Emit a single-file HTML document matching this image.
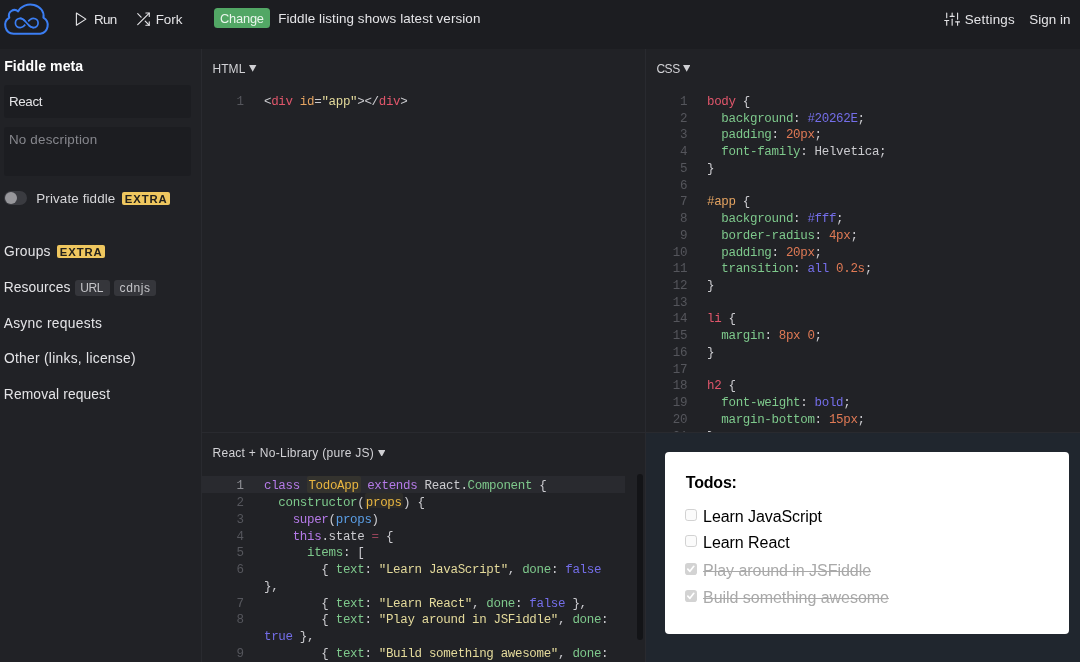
<!DOCTYPE html>
<html lang="en">
<head>
<meta charset="utf-8">
<title>React - JSFiddle</title>
<style>
*{box-sizing:border-box;margin:0;padding:0}
html,body{width:1080px;height:662px;overflow:hidden;background:#212226;color:#e4e4e7;font-family:"Liberation Sans",Arial,sans-serif;font-size:13px}
.t{position:absolute;white-space:nowrap;line-height:1;font-family:"Liberation Sans",Arial,sans-serif}
.abs{position:absolute}
#header{position:absolute;left:0;top:0;width:1080px;height:49px;background:#1c1d21}
.ico{position:absolute;top:10.85px;width:16.3px;height:16.3px;fill:none;stroke:#e4e4e7;stroke-width:1.65;stroke-linecap:round;stroke-linejoin:round}
.box{position:absolute;background:#1c1d21;border-radius:3px}
.badge{position:absolute;background:#efc75f;border-radius:2px}
.tag{position:absolute;background:#35363b;border-radius:3px}
.tri{position:absolute;width:0;height:0;border-left:3.7px solid transparent;border-right:3.7px solid transparent;border-top:6.6px solid #cfcfd3}
.code,.ln{position:absolute;font-family:"Liberation Mono","DejaVu Sans Mono",monospace;font-size:12.5px;letter-spacing:-0.33px;line-height:16.73px;white-space:pre}
.code{color:#cbcbcf}
.ln{color:#55565c;text-align:right;width:40px}
.r{color:#e0566b}.g{color:#7ec98c}.o{color:#e5a461}.y{color:#e4da9b}.p{color:#746ee9}.n{color:#e07a55}.v{color:#b57ae8}.b{color:#5b9fe6}.op{color:#96445a}
.hl{color:#e9b640;padding:0 1.4px}
.cb{position:absolute;width:11.9px;height:11.9px;border-radius:2.8px}
.cb.off{background:#fbfbfb;border:1px solid #d2d2d2}
.cb.on{background:#d3d3d3}
</style>
</head>
<body>
<div id="root" style="position:absolute;left:0;top:0;width:1080px;height:662px;will-change:transform">
<div id="header"></div>
<!-- logo -->
<svg class="abs" style="left:0;top:0" width="60" height="40" viewBox="0 0 60 40" fill="none" stroke="#3b7ef3" stroke-linecap="round" stroke-linejoin="round">
<path stroke-width="2" d="M13.6 33.7 A8.7 8.7 0 0 1 9.3 17.6 A5.6 5.6 0 0 1 18.2 11.4 A13.2 11.2 0 0 1 43.4 17.6 A8.7 8.7 0 0 1 40.3 33.7 Z"/>
<path stroke-width="1.7" d="M26.75 23 C24.5 20.2 22.8 18.4 20.2 18.4 C17.4 18.4 15.4 20.4 15.4 23 C15.4 25.6 17.4 27.6 20.2 27.6 C22.8 27.6 24.5 25.8 26.75 23 C29 20.2 30.7 18.4 33.3 18.4 C36.1 18.4 38.1 20.4 38.1 23 C38.1 25.6 36.1 27.6 33.3 27.6 C30.7 27.6 29 25.8 26.75 23 Z"/>
<path stroke="#1c1d21" stroke-width="4.4" stroke-linecap="butt" d="M24.9 20.9 L28.6 25.1"/>
<path stroke-width="1.7" d="M20.2 18.4 C22.8 18.4 24.5 20.2 26.75 23 C29 25.8 30.7 27.6 33.3 27.6"/>
</svg>
<svg class="ico" style="left:73.15px" viewBox="0 0 24 24"><polygon points="5 3 19 12 5 21 5 3"/></svg>
<svg class="ico" style="left:134.9px" viewBox="0 0 24 24"><polyline points="16 3 21 3 21 8"/><line x1="4" y1="20" x2="21" y2="3"/><polyline points="21 16 21 21 16 21"/><line x1="15" y1="15" x2="21" y2="21"/><line x1="4" y1="4" x2="9" y2="9"/></svg>
<svg class="ico" style="left:943.9px" viewBox="0 0 24 24"><line x1="4" y1="21" x2="4" y2="14"/><line x1="4" y1="10" x2="4" y2="3"/><line x1="12" y1="21" x2="12" y2="12"/><line x1="12" y1="8" x2="12" y2="3"/><line x1="20" y1="21" x2="20" y2="16"/><line x1="20" y1="12" x2="20" y2="3"/><line x1="1" y1="14" x2="7" y2="14"/><line x1="9" y1="8" x2="15" y2="8"/><line x1="17" y1="16" x2="23" y2="16"/></svg>
<div class="abs" style="left:214px;top:8px;width:56.2px;height:20px;background:#52a765;border-radius:3.5px"></div>

<!-- sidebar -->
<div class="abs" style="left:201px;top:49px;width:1px;height:613px;background:#292a2f"></div>
<div class="box" style="left:4px;top:85px;width:187px;height:32.5px"></div>
<div class="box" style="left:4px;top:126.7px;width:187px;height:49px"></div>
<div class="abs" style="left:4px;top:190.8px;width:23px;height:14px;border-radius:7px;background:#3a3b40"></div>
<div class="abs" style="left:4.6px;top:191.6px;width:12px;height:12px;border-radius:50%;background:#97979b"></div>
<div class="badge" style="left:122px;top:192.4px;width:48.1px;height:12.5px"></div>
<div class="badge" style="left:57px;top:245px;width:48px;height:13.2px"></div>
<div class="tag" style="left:75.1px;top:280.2px;width:34.8px;height:15.6px"></div>
<div class="tag" style="left:114.1px;top:280.2px;width:41.8px;height:15.6px"></div>

<!-- panel borders -->
<div class="abs" style="left:645px;top:49px;width:1px;height:613px;background:#292a2f"></div>
<div class="abs" style="left:202px;top:432px;width:878px;height:1px;background:#292a2f"></div>
<svg class="abs" style="left:249.2px;top:65.2px" width="7.4" height="6.8" viewBox="0 0 7.4 6.8"><polygon points="0,0 7.4,0 3.7,6.8" fill="#cfcfd3"/></svg>
<svg class="abs" style="left:682.6px;top:65.2px" width="7.4" height="6.8" viewBox="0 0 7.4 6.8"><polygon points="0,0 7.4,0 3.7,6.8" fill="#cfcfd3"/></svg>
<svg class="abs" style="left:378.1px;top:449.6px" width="7.4" height="6.8" viewBox="0 0 7.4 6.8"><polygon points="0,0 7.4,0 3.7,6.8" fill="#cfcfd3"/></svg>

<!-- HTML code -->
<div class="ln" style="left:203.6px;top:93.9px">1</div>
<div class="code" style="left:264px;top:93.9px">&lt;<span class="r">div</span> <span class="o">id</span>=<span class="y">"app"</span>&gt;&lt;/<span class="r">div</span>&gt;</div>

<!-- CSS code -->
<div class="abs" style="left:646px;top:85px;width:434px;height:347px;overflow:hidden">
<div class="ln" style="left:1.1px;top:8.9px">1
2
3
4
5
6
7
8
9
10
11
12
13
14
15
16
17
18
19
20
21</div>
<div class="code" style="left:61px;top:8.9px"><span class="r">body</span> {
  <span class="g">background</span>: <span class="p">#20262E</span>;
  <span class="g">padding</span>: <span class="n">20px</span>;
  <span class="g">font-family</span>: Helvetica;
}

<span class="o">#app</span> {
  <span class="g">background</span>: <span class="p">#fff</span>;
  <span class="g">border-radius</span>: <span class="n">4px</span>;
  <span class="g">padding</span>: <span class="n">20px</span>;
  <span class="g">transition</span>: <span class="p">all</span> <span class="n">0.2s</span>;
}

<span class="r">li</span> {
  <span class="g">margin</span>: <span class="n">8px</span> <span class="n">0</span>;
}

<span class="r">h2</span> {
  <span class="g">font-weight</span>: <span class="p">bold</span>;
  <span class="g">margin-bottom</span>: <span class="n">15px</span>;
}</div>
</div>

<!-- JS code -->
<div class="abs" style="left:202px;top:476.2px;width:423px;height:16.8px;background:#292a2f"></div>
<div class="abs" style="left:307.3px;top:476.2px;width:53.6px;height:16.4px;border-radius:2px;background:#34332e"></div>
<div class="abs" style="left:364.8px;top:493.4px;width:38.4px;height:14.9px;border-radius:2px;background:#2d2c29"></div>
<div class="abs" style="left:636.8px;top:474px;width:6.2px;height:166px;border-radius:3.1px;background:#131417"></div>
<div class="abs" style="left:202px;top:470px;width:430px;height:192px;overflow:hidden">
<div class="ln" style="left:1.6px;top:8.4px"><span style="color:#8e8f95">1</span>
2
3
4
5
6

7
8

9</div>
<div class="code" style="left:62px;top:8.4px"><span class="v">class</span> <span class="hl">TodoApp</span> <span class="v">extends</span> React.<span class="g">Component</span> {
  <span class="g">constructor</span>(<span class="hl">props</span>) {
    <span class="v">super</span>(<span class="b">props</span>)
    <span class="v">this</span>.state <span class="op">=</span> {
      <span class="g">items</span>: [
        { <span class="g">text</span>: <span class="y">"Learn JavaScript"</span>, <span class="g">done</span>: <span class="p">false</span>
},
        { <span class="g">text</span>: <span class="y">"Learn React"</span>, <span class="g">done</span>: <span class="p">false</span> },
        { <span class="g">text</span>: <span class="y">"Play around in JSFiddle"</span>, <span class="g">done</span>:
<span class="p">true</span> },
        { <span class="g">text</span>: <span class="y">"Build something awesome"</span>, <span class="g">done</span>:</div>
</div>

<!-- Result -->
<div class="abs" style="left:646px;top:433px;width:434px;height:229px;background:#20262e"></div>
<div class="abs" style="left:665.2px;top:452.3px;width:403.4px;height:181.7px;background:#fff;border-radius:4px"></div>
<div class="cb off" style="left:685.2px;top:509.3px"></div>
<div class="cb off" style="left:685.2px;top:535.4px"></div>
<div class="cb on" style="left:685.2px;top:562.7px"></div>
<div class="cb on" style="left:685.2px;top:589.9px"></div>
<svg class="abs" style="left:685.4px;top:562.9px" width="11.5" height="11.5" viewBox="0 0 11.5 11.5" fill="none" stroke="#fff" stroke-width="1.7" stroke-linecap="round" stroke-linejoin="round"><path d="M2.8 6.1 L4.9 8.3 L8.8 3.3"/></svg>
<svg class="abs" style="left:685.4px;top:590.1px" width="11.5" height="11.5" viewBox="0 0 11.5 11.5" fill="none" stroke="#fff" stroke-width="1.7" stroke-linecap="round" stroke-linejoin="round"><path d="M2.8 6.1 L4.9 8.3 L8.8 3.3"/></svg>

<span id="run" class="t" style="left:93.99px;top:13.32px;font-size:13.4px;letter-spacing:-0.642px;color:#e4e4e7">Run</span>
<span id="fork" class="t" style="left:155.69px;top:13.32px;font-size:13.4px;letter-spacing:0.002px;color:#e4e4e7">Fork</span>
<span id="change" class="t" style="left:219.94px;top:13.10px;font-size:12.8px;letter-spacing:-0.163px;color:#eaf6ec">Change</span>
<span id="listing" class="t" style="left:278.22px;top:11.70px;font-size:13.4px;letter-spacing:0.100px;color:#e4e4e7">Fiddle listing shows latest version</span>
<span id="settings" class="t" style="left:964.67px;top:13.20px;font-size:13.4px;letter-spacing:0.238px;color:#e4e4e7">Settings</span>
<span id="signin" class="t" style="left:1029.36px;top:13.20px;font-size:13.4px;letter-spacing:0.015px;color:#e4e4e7">Sign in</span>
<span id="meta" class="t" style="left:4.18px;top:59.30px;font-size:14.1px;letter-spacing:0.072px;color:#fff;font-weight:bold">Fiddle meta</span>
<span id="react" class="t" style="left:8.89px;top:95.32px;font-size:13.4px;letter-spacing:-0.342px;color:#e4e4e7">React</span>
<span id="nodesc" class="t" style="left:8.89px;top:132.82px;font-size:13.4px;letter-spacing:0.211px;color:#86878d">No description</span>
<span id="private" class="t" style="left:36.31px;top:191.90px;font-size:13.4px;letter-spacing:0.120px;color:#d6d6d9">Private fiddle</span>
<span id="extra1" class="t" style="left:124.83px;top:193.91px;font-size:11.3px;letter-spacing:0.896px;color:#23211c;font-weight:bold">EXTRA</span>
<span id="groups" class="t" style="left:4.07px;top:244.91px;font-size:13.8px;letter-spacing:0.226px;color:#e4e4e7">Groups</span>
<span id="extra2" class="t" style="left:59.83px;top:246.60px;font-size:11.3px;letter-spacing:0.896px;color:#23211c;font-weight:bold">EXTRA</span>
<span id="resources" class="t" style="left:3.81px;top:280.81px;font-size:13.8px;letter-spacing:0.089px;color:#e4e4e7">Resources</span>
<span id="url" class="t" style="left:80.29px;top:281.81px;font-size:12px;letter-spacing:-0.470px;color:#c4c4c8">URL</span>
<span id="cdnjs" class="t" style="left:119.47px;top:281.81px;font-size:12px;letter-spacing:0.657px;color:#c4c4c8">cdnjs</span>
<span id="async" class="t" style="left:3.64px;top:316.51px;font-size:13.8px;letter-spacing:0.310px;color:#e4e4e7">Async requests</span>
<span id="other" class="t" style="left:4.00px;top:351.91px;font-size:13.8px;letter-spacing:0.274px;color:#e4e4e7">Other (links, license)</span>
<span id="removal" class="t" style="left:3.81px;top:387.51px;font-size:13.8px;letter-spacing:0.135px;color:#e4e4e7">Removal request</span>
<span id="thtml" class="t" style="left:212.49px;top:62.81px;font-size:12px;letter-spacing:0.055px;color:#d2d2d6">HTML</span>
<span id="tcss" class="t" style="left:656.41px;top:62.91px;font-size:12px;letter-spacing:-0.467px;color:#d2d2d6">CSS</span>
<span id="tjs" class="t" style="left:212.49px;top:446.91px;font-size:12px;letter-spacing:0.281px;color:#d2d2d6">React + No-Library (pure JS)</span>
<span id="todos" class="t" style="left:685.82px;top:475.41px;font-size:16px;letter-spacing:-0.205px;color:#000;font-weight:bold">Todos:</span>
<span id="li1" class="t" style="left:703.07px;top:509.30px;font-size:16px;letter-spacing:-0.078px;color:#000">Learn JavaScript</span>
<span id="li2" class="t" style="left:703.07px;top:535.30px;font-size:16px;letter-spacing:-0.062px;color:#000">Learn React</span>
<span id="li3" class="t" style="left:703.07px;top:562.51px;font-size:16px;letter-spacing:-0.046px;color:#a9a9a9;text-decoration:line-through;text-decoration-thickness:1px">Play around in JSFiddle</span>
<span id="li4" class="t" style="left:703.07px;top:589.50px;font-size:16px;letter-spacing:-0.040px;color:#a9a9a9;text-decoration:line-through;text-decoration-thickness:1px">Build something awesome</span>
</div>
</body>
</html>
